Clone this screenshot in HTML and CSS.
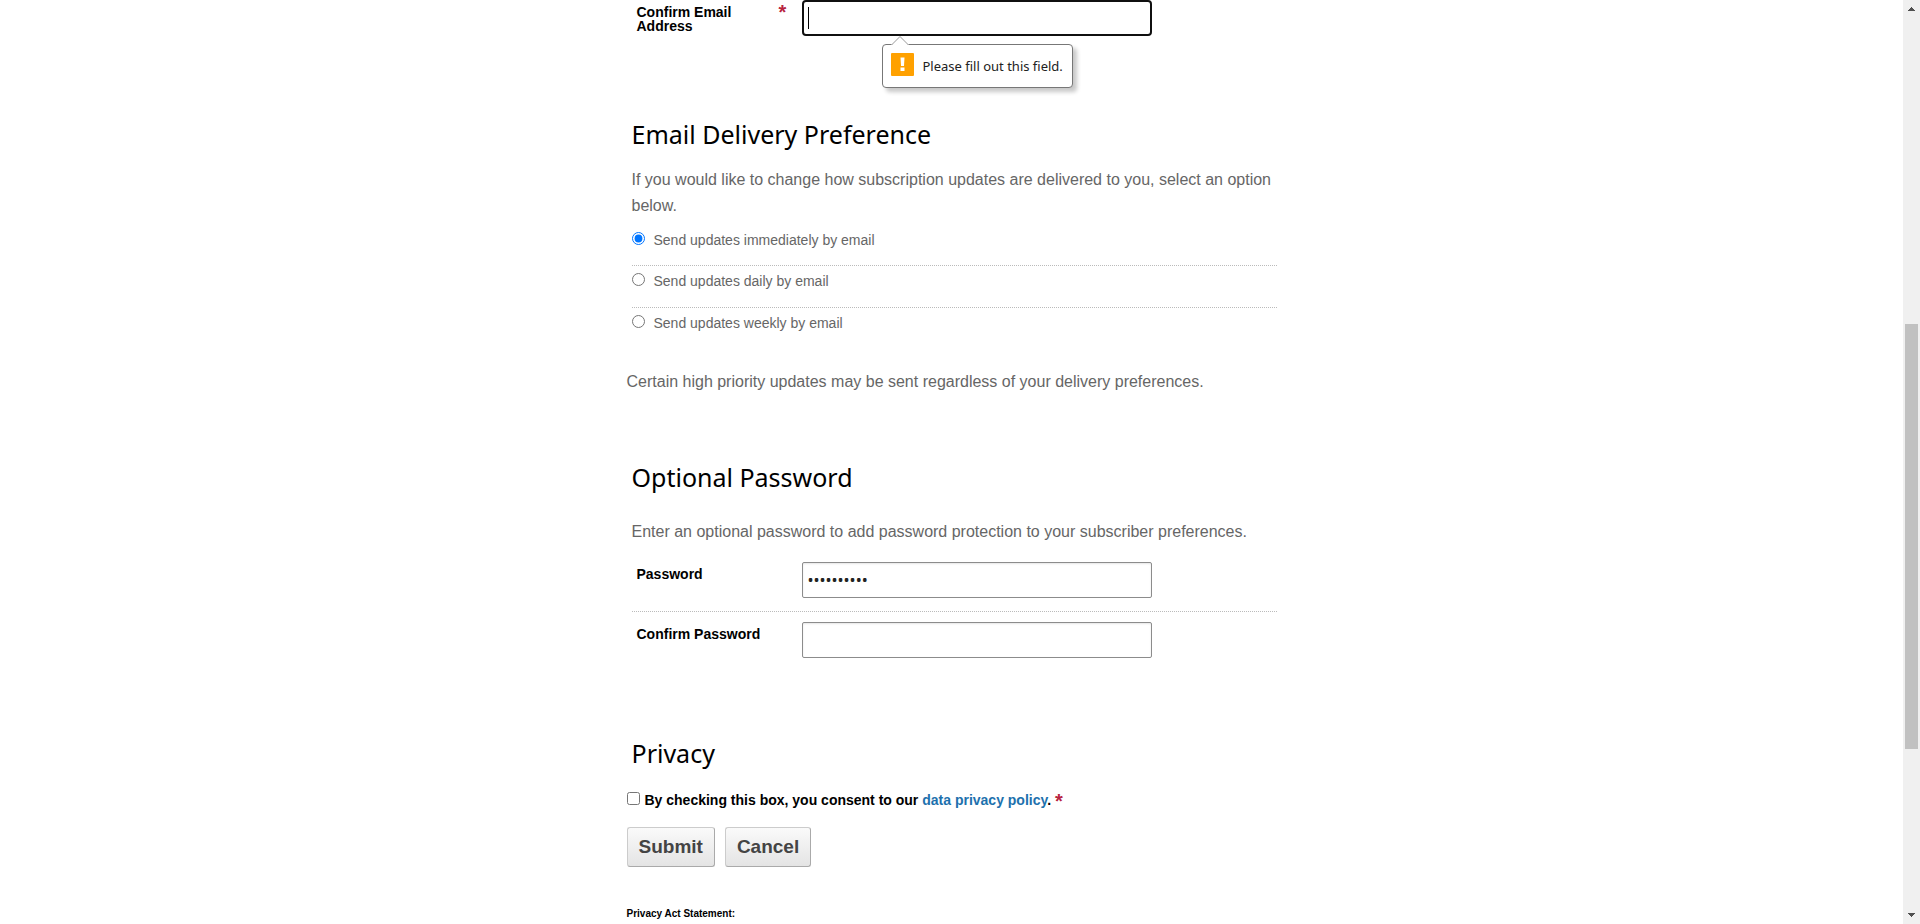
FILE: index.html
```
<!DOCTYPE html>
<html lang="en">
<head>
<meta charset="utf-8">
<title>Subscription preferences</title>
<link rel="stylesheet" href="styles.css">
</head>
<body>
<div class="page">
  <main class="content">
    <form class="form">
      <section class="group">
        <div class="field field-first">
          <label class="label" for="confirm-email">Confirm Email Address</label>
          <span class="required">*</span>
          <div class="control focused">
            <input class="input" type="email" id="confirm-email">
            <div class="tip" role="alert">
              <svg class="tip-arrow" width="18" height="10" viewBox="0 0 18 10"><path d="M0 10V8.500H1L9 .5L17 8.500H18V10Z" fill="#fff"/><path d="M.5 9L9 .5L17.500 9" fill="none" stroke="#999"/></svg>
              <svg class="tip-icon" width="23" height="23" viewBox="0 0 23 23"><rect width="23" height="23" rx="1" fill="#ffa100"/><path d="M9.500 4.500h4l-.5 8.500h-3zM9.500 14.500h4v3.500h-4z" fill="#fff"/></svg>
              <span>Please fill out this field.</span>
            </div>
          </div>
        </div>
      </section>

      <section class="group delivery">
        <h2 class="heading">Email Delivery Preference</h2>
        <p class="text">If you would like to change how subscription updates are delivered to you, select an option below.</p>
        <div class="options">
          <div class="option"><input class="radio" type="radio" name="delivery" id="now" checked><label for="now">Send updates immediately by email</label></div>
          <div class="option"><input class="radio" type="radio" name="delivery" id="daily"><label for="daily">Send updates daily by email</label></div>
          <div class="option"><input class="radio" type="radio" name="delivery" id="weekly"><label for="weekly">Send updates weekly by email</label></div>
        </div>
      </section>
      <p class="text note">Certain high priority updates may be sent regardless of your delivery preferences.</p>

      <section class="group">
        <h2 class="heading">Optional Password</h2>
        <p class="text text-spaced">Enter an optional password to add password protection to your subscriber preferences.</p>
        <div class="field">
          <label class="label" for="password">Password</label>
          <div class="control"><input class="input" type="password" id="password" value="abcdefghij"></div>
        </div>
        <div class="field">
          <label class="label" for="confirm-password">Confirm Password</label>
          <div class="control"><input class="input" type="password" id="confirm-password"></div>
        </div>
      </section>

      <section class="privacy">
        <h2 class="heading privacy-heading">Privacy</h2>
        <div class="consent">
          <input class="checkbox" type="checkbox" id="consent">
          <label for="consent">By checking this box, you consent to our <a class="link" href="#privacy">data privacy policy</a>. <span class="star">*</span></label>
        </div>
        <div class="buttons">
          <button class="button" type="submit">Submit</button>
          <button class="button" type="button">Cancel</button>
        </div>
      </section>
      <p class="statement" id="privacy">Privacy Act Statement:</p>
    </form>
  </main>
  <div class="scrollbar" aria-hidden="true">
    <svg class="scroll-arrow" width="7" height="4" viewBox="0 0 7 4"><path d="M3 0h1v1h1v1h1v1h1v1H0V3h1V2h1V1h1z" fill="#505050"/></svg>
    <div class="track"><div class="thumb"></div></div>
    <svg class="scroll-arrow" width="7" height="4" viewBox="0 0 7 4"><path d="M0 0h7v1H6v1H5v1H4v1H3V3H2V2H1V1H0z" fill="#505050"/></svg>
  </div>
</div>
</body>
</html>
```
FILE: styles.css
```
* { box-sizing: border-box; }
body {
  margin: 0;
  background: #fff;
  color: #000;
  font-family: "Liberation Sans", Arial, sans-serif;
  font-size: 14px;
}
.page {
  display: grid;
  grid-template-columns: 1fr 17px;
  min-height: 100vh;
}
.form {
  max-width: 650px;
  margin: 0 auto;
}
.group { padding-left: 5px; }

.field {
  display: flex;
  align-items: flex-start;
  padding: 10px 5px 13px;
}
.field + .field { border-top: 1px dotted #bbb; }
.field-first { padding-top: 0; }
.label {
  flex: 0 0 142px;
  padding-top: 5px;
  padding-right: 24px;
  font-weight: 700;
  line-height: 14px;
}
.field .label:not(:has(+ .required)) { flex-basis: 165px; }
.required {
  flex: 0 0 23px;
  font-size: 20px;
  font-weight: 700;
  line-height: 24px;
  color: #b8243f;
}
.star {
  font-size: 20px;
  line-height: 16px;
  vertical-align: -3px;
  color: #b8243f;
}
.control { position: relative; flex: 0 1 350px; }
.input {
  display: block;
  width: 100%;
  height: 36px;
  padding: 0 5px;
  border: 1px solid #8c8c8c;
  border-radius: 2px;
  background: #fff;
  box-shadow: inset 0 1px 2px #e6e6e6;
  font-family: "Noto Sans", sans-serif;
  font-size: 16px;
  color: #222;
}
.focused .input {
  border: 2px solid #101010;
  border-radius: 4px;
  box-shadow: none;
}
.focused::after {
  content: "";
  position: absolute;
  top: 7px;
  left: 6px;
  width: 1px;
  height: 22px;
  background: #000;
}
.tip {
  position: absolute;
  top: 44px;
  left: 80px;
  display: flex;
  align-items: center;
  gap: 9px;
  height: 44px;
  padding: 0 9px 0 8px;
  border: 1px solid #777;
  border-radius: 4px;
  background: #fff;
  box-shadow: 4px 4px 4px #c8c8c8;
  font-family: "Noto Sans", sans-serif;
  font-size: 13px;
  white-space: nowrap;
  color: #222;
}
.tip-icon { margin-bottom: 3px; }
.tip-arrow { position: absolute; top: -9px; left: 8px; }

.heading {
  margin: 0;
  padding-top: 64px;
  font-family: "Noto Sans", sans-serif;
  font-size: 25px;
  font-weight: 400;
  line-height: 36px;
}
.delivery { padding-top: 3px; }
.text {
  margin: 0;
  padding-top: 15px;
  font-size: 16px;
  line-height: 26px;
  color: #666;
}
.options { padding-top: 6px; }
.option {
  display: flex;
  gap: 9px;
  height: 40px;
  padding-top: 7px;
  line-height: 17px;
  color: #666;
}
.option + .option { height: 42px; border-top: 1px dotted #bbb; }
.radio, .checkbox {
  flex: none;
  width: 13px;
  height: 13px;
  margin: 0;
}
.text.note { padding-top: 20px; }
.text.text-spaced { padding: 24px 0 7px; }

.consent {
  display: flex;
  gap: 5px;
  padding-top: 21px;
  font-weight: 700;
  line-height: 16px;
}
.privacy-heading { padding-left: 5px; }
.link { color: #1d71ad; text-decoration: none; }
.buttons {
  display: flex;
  gap: 10px;
  padding-top: 18px;
}
.button {
  height: 40px;
  padding: 0 11px;
  border: 1px solid;
  border-color: #ccc #aaa #aaa #ccc;
  border-radius: 3px;
  background: linear-gradient(#fafafa, #e4e4e4);
  font-family: "Liberation Sans", Arial, sans-serif;
  font-size: 19px;
  font-weight: 700;
  color: #444;
}
.statement {
  margin: 0;
  padding-top: 41px;
  font-size: 10px;
  font-weight: 700;
  line-height: 12px;
}

.scrollbar {
  display: flex;
  flex-direction: column;
  align-items: center;
  padding: 7px 2px;
  background: #f0f0f0;
}
.scroll-arrow { display: block; }
.track {
  flex: 1;
  display: grid;
  grid-template-rows: 313fr 425fr 164fr;
  width: 100%;
}
.thumb { grid-row: 2; background: #c1c1c1; }
```
